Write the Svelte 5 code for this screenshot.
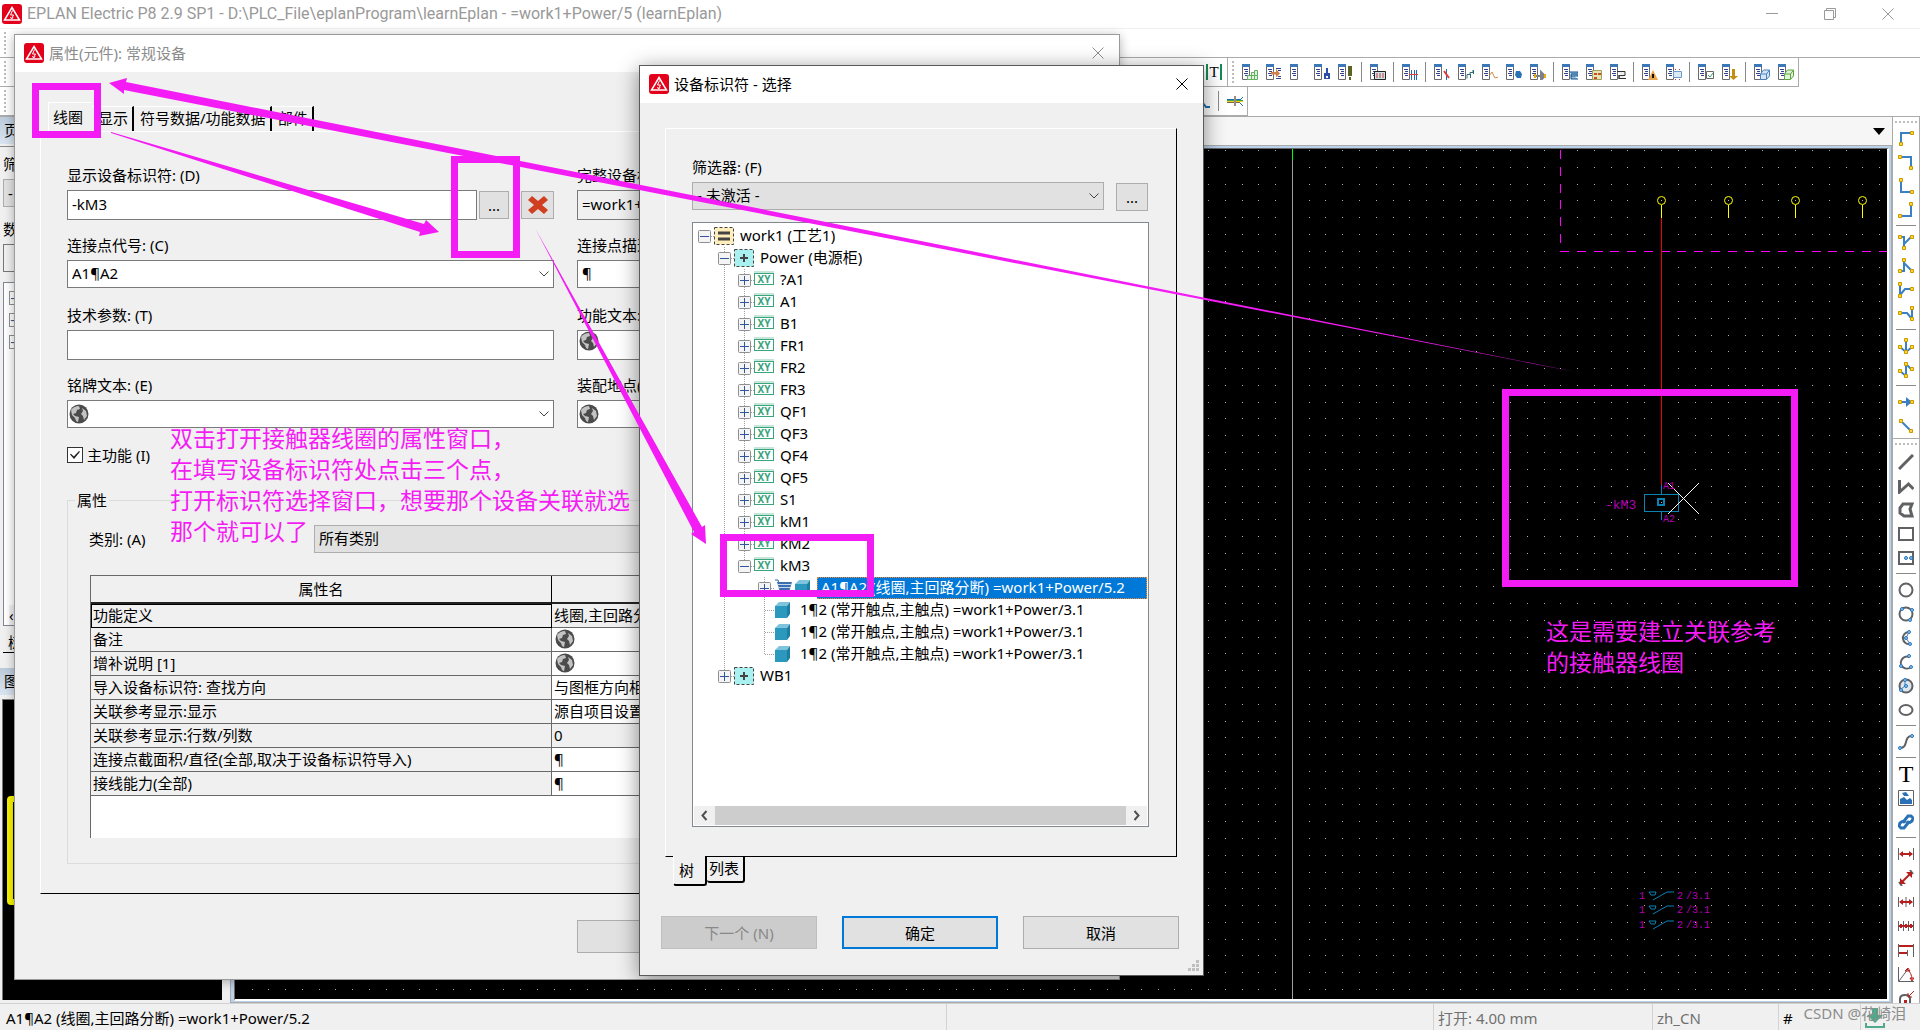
<script lang="ts">
    type Shape = { d: string; s?: string; f?: string; w?: number };
    type TreeRow = {
        depth: number;
        text: string;
        kind: "plant" | "place" | "xy" | "part";
        node?: "open" | "closed";
        last?: boolean;
        guides?: number[];
        selected?: boolean;
    };

    const PITCH = 16.78;

    let canvasWidth = $state(1652);
    let canvasHeight = $state(850);

    // Grid dots of the schematic page, snapped to whole pixels.
    let dots = $derived.by(() => {
        let d = "";
        for (let y = 1; y < canvasHeight; y += PITCH) {
            for (let x = 16.5; x < canvasWidth; x += PITCH) {
                d += `M${Math.round(x)} ${Math.round(y)}h1v1h-1z`;
            }
        }
        return d;
    });

    const connectors = [1426, 1493, 1560, 1627];
    const contacts = [746, 760, 775];

    const deviceNames = [
        "?A1", "A1", "B1", "FR1", "FR2", "FR3", "QF1",
        "QF3", "QF4", "QF5", "S1", "kM1", "kM2",
    ];

    const tree: TreeRow[] = [
        { depth: 0, text: "work1 (工艺1)", kind: "plant", node: "open" },
        { depth: 1, text: "Power (电源柜)", kind: "place", node: "open" },
        ...deviceNames.map((text): TreeRow => ({
            depth: 2, text, kind: "xy", node: "closed", guides: [1],
        })),
        { depth: 2, text: "kM3", kind: "xy", node: "open", guides: [1], last: true },
        {
            depth: 3,
            text: "A1¶A2 (线圈,主回路分断) =work1+Power/5.2",
            kind: "part",
            node: "closed",
            guides: [1],
            selected: true,
        },
        { depth: 3, text: "1¶2 (常开触点,主触点) =work1+Power/3.1", kind: "part", guides: [1] },
        { depth: 3, text: "1¶2 (常开触点,主触点) =work1+Power/3.1", kind: "part", guides: [1] },
        { depth: 3, text: "1¶2 (常开触点,主触点) =work1+Power/3.1", kind: "part", guides: [1], last: true },
        { depth: 1, text: "WB1", kind: "place", node: "closed", last: true },
    ];

    const properties = [
        { name: "功能定义", value: "线圈,主回路分断", grey: true, current: true },
        { name: "备注", globe: true },
        { name: "增补说明 [1]", globe: true },
        { name: "导入设备标识符: 查找方向", value: "与图框方向相同" },
        { name: "关联参考显示:显示", value: "源自项目设置" },
        { name: "关联参考显示:行数/列数", value: "0", grey: true },
        { name: "连接点截面积/直径(全部,取决于设备标识符导入)", value: "¶" },
        { name: "接线能力(全部)", value: "¶" },
    ];

    // Toolbar icons: each one is a navigator sheet with its own overlay.
    const sheet: Shape[] = [
        { d: "M0 0h8v3H0z", f: "#3b78b8" },
        { d: "M.5 3v12.500h7V3", s: "#6a6a6a", f: "#fff" },
        { d: "M2 5.500h4M3 7.500h3M2 9.500h4M3 11.500h3", s: "#33438c" },
    ];

    const sheetIcons: (Shape[] | null)[] = [
        [{ d: "M5.500 15.500v-4h4v-3h3v-2h3v9zM9.500 11v4M12.500 8v7M6 11.500h10", s: "#63b263", f: "#dff3df" }],
        [{ d: "M5 8h5V5l4 4.500-4 4v-3H5z", f: "#d5804a" }, { d: "M10 4.500h5M12 6.500h3M12 12.500h3M10 14.500h5", s: "#33438c" }],
        [],
        [{ d: "M12 4h2v5h-2z", f: "#2c4fa8" }, { d: "M10 9h6v6h-6z", f: "#2c4fa8" }, { d: "M12 12h2v2h-2z", f: "#fff" }],
        [{ d: "M10 2h4v10h-4zM11 13h2v3h-2z", f: "#5b6426" }],
        null,
        [{ d: "M4.500 7.500h11v8h-11z", s: "#222", f: "#cfe3ea" }, { d: "M7 9v5M10 9v5M13 9v5", s: "#c33b3b" }],
        null,
        [{ d: "M9.500 6v10M12.500 6v10M14.500 6v10", s: "#1c6fae" }, { d: "M7 10.500h9", s: "#e43b3b" }],
        null,
        [{ d: "M12.500 5v11", s: "#1c6fae" }, { d: "M10 7l5 7", s: "#e43b3b", w: 2 }],
        [{ d: "M9 14.500v-4h3v-2h3V6M12.500 10v4M15.500 6v4", s: "#2f6f74" }],
        [{ d: "M7 12l3-4 3 6 3-1", s: "#d38a4e" }],
        [{ d: "M10 7h4l2 3-1 4h-4l-2-3z", f: "#2a72b5" }],
        [{ d: "M5 12h8M11 8l4 4-4 4z", s: "#7d828a", f: "#7d828a", w: 2 }, { d: "M4 10h2v4H4zM14 10h2v4h-2z", f: "#e0ac10" }],
        null,
        [{ d: "M7 8h9v4H9v3h7M9 12v-2h6", s: "#0f4f86", f: "#8fc0e6" }],
        [{ d: "M6.500 6.500h9v9h-9z", s: "#a4a060", f: "#e6e3b5" }, { d: "M8 9h3v2H8zM12 9h3v2h-3zM8 13h3v2H8z", f: "#c8501f" }],
        [{ d: "M7 7.500h8v4H9v3h7M9 11v4", s: "#333", f: "#eee" }],
        null,
        [{ d: "M11 6l5 10H6z", f: "#eba54c" }, { d: "M10 10h2v4h-2z", f: "#111" }],
        [{ d: "M7.500 7.500h8v6h-8z", s: "#6c9bc4", f: "#d9e9f6" }, { d: "M9.500 5v1M13.500 5v1M9.500 15v1M13.500 15v1", s: "#c33b3b" }],
        null,
        [{ d: "M8.500 7.500h7v7h-7z", s: "#666", f: "#fff" }, { d: "M10 11l2 2 3-4", s: "#3a9c6e" }],
        [{ d: "M10 5h3v7h3l-4.500 4L7 12h3z", f: "#c2900f" }],
        null,
        [{ d: "M6.500 10l3-4h6v6l-3 3.500h-6zM6.500 10h6v5M12.500 10l3-4", s: "#4a80bd", f: "#d5e5f5" }],
        [{ d: "M6.500 10l3-4h6v6l-3 3.500h-6zM6.500 10h6v5M12.500 10l3-4", s: "#5aa83f", f: "#e1f2d8" }],
    ];

    const blue = "#3b7fc4";
    const grey = "#5f6163";
    const red = "#b51f1f";

    function pin(x: number, y: number): Shape {
        return { d: `M${x - 1.5} ${y - 1.5}h3v3h-3z`, s: "#c99a00", f: "#ffd83a" };
    }

    function dot(x: number, y: number): Shape {
        return { d: `M${x - 1.5} ${y}a1.500 1.500 0 1 0 3 0a1.500 1.500 0 1 0-3 0`, s: "#2b74b8", f: "#8fc4f0" };
    }

    const connectionIcons: (Shape[] | null)[] = [
        [{ d: "M3 13V3h11", s: blue, w: 2 }, pin(3, 14), pin(14, 3)],
        [{ d: "M2 3h11v10", s: blue, w: 2 }, pin(2, 3), pin(13, 14)],
        [{ d: "M3 2v12h11", s: blue, w: 2 }, pin(3, 2), pin(14, 14)],
        [{ d: "M2 14h11V3", s: blue, w: 2 }, pin(2, 14), pin(13, 2)],
        null,
        [{ d: "M2 3h4v11M6 10l8-8", s: blue, w: 2 }, pin(2, 3), pin(14, 3), pin(6, 14)],
        [{ d: "M2 13h4V3M6 5l8 8", s: blue, w: 2 }, pin(2, 13), pin(14, 13), pin(6, 2)],
        [{ d: "M2 3v10M2 13l5-6h7", s: blue, w: 2 }, pin(2, 2), pin(2, 14), pin(14, 7)],
        [{ d: "M14 3v10M14 13L9 7H2", s: blue, w: 2 }, pin(14, 2), pin(14, 13), pin(2, 7)],
        null,
        [{ d: "M8 2v12M2 9l6 5 6-5", s: blue, w: 2 }, pin(8, 2), pin(2, 9), pin(14, 9), pin(8, 14)],
        [{ d: "M2 9l6 5V2l6 6", s: blue, w: 2 }, pin(8, 2), pin(2, 9), pin(14, 7), pin(8, 14)],
        null,
        [{ d: "M2 8h10", s: blue, w: 2 }, { d: "M8 3l6 5-6 5z", f: blue }, pin(2, 8), pin(14, 8)],
        [{ d: "M3 3l10 10", s: blue, w: 2 }, pin(3, 3), pin(13, 13)],
    ];

    const ring = "M1.500 8a6.500 6.500 0 1 0 13 0a6.500 6.500 0 1 0-13 0";

    const drawIcons: (Shape[] | "T" | null)[] = [
        [{ d: "M1 15L15 1", s: grey, w: 3 }],
        [{ d: "M1.500 2v12l9-8 5 5", s: grey, w: 3 }],
        [{ d: "M2 6l3-4h9l-2 5 2 7H6l-4-3z", s: grey, w: 3 }],
        [{ d: "M1 2h14v12H1z", s: grey, w: 2 }],
        [{ d: "M1 2h14v12H1z", s: grey, w: 2 }, dot(8, 8), dot(13, 8)],
        null,
        [{ d: ring, s: grey, w: 2 }],
        [{ d: ring, s: grey, w: 2 }, dot(4, 3), dot(14, 4), dot(12, 14)],
        [{ d: "M10 2a6 6 0 1 0 2 12", s: grey, w: 2 }, { d: "M11 2L8 8l4 6", s: blue }, dot(11, 2), dot(8, 8), dot(12, 14)],
        [{ d: "M11 3a6 6 0 1 0 2 10", s: grey, w: 2 }, dot(11, 2), dot(3, 12), dot(13, 13)],
        [{ d: ring, s: grey, f: "#dde6ee", w: 2 }, { d: "M7 2v6l-5 4", s: blue }, dot(7, 2), dot(8, 8), dot(3, 12)],
        [{ d: "M1.500 8a6.500 5 0 1 0 13 0a6.500 5 0 1 0-13 0", s: grey, w: 2 }],
        null,
        [{ d: "M2 14c9 0 3-12 12-12", s: grey, w: 2 }, dot(2, 14), dot(14, 2)],
        null,
        "T",
        [{ d: "M.5 .5h15v15H.5z", s: grey, f: "#fff" }, { d: "M2 14V9l4-2 3 3 3-2 2 2v4zM4 3l4-1 3 4H6z", f: "#2a72b5" }],
        [{ d: "M7 9l-1-2 4-5h3l2 2-1 3-3 2M9 7l1 2-4 5H3l-2-2 1-3 3-2", s: "#2a72b5", w: 3 }],
        null,
        [{ d: "M.5 2v12M15.500 2v12", s: grey }, { d: "M2 8h12", s: red, w: 2 }, { d: "M1 8l4-3v6zM15 8l-4-3v6z", f: red }],
        [{ d: "M1 12l3 4M12 0l3 4", s: grey, w: 2 }, { d: "M4 12l8-8", s: red, w: 2 }, { d: "M2 14V8l6 6zM14 2v6L8 2z", f: red }],
        [{ d: "M.5 3v10M8 3v10M15.500 3v10", s: grey }, { d: "M2 8h12", s: red, w: 2 }, { d: "M1 8l4-3v6zM15 8l-4-3v6z", f: red }],
        [{ d: "M.5 3v10M5.500 3v10M10.500 3v10M15.500 3v10", s: grey }, { d: "M1 8h14M3 6v4M8 6v4M13 6v4", s: red, w: 2 }],
        [{ d: "M.5 2v13M15.500 2v13M9.500 8v6", s: grey }, { d: "M1 4h14M1 11h8", s: red, w: 2 }],
        [{ d: "M.5 1v14.500H16M1 15L10 3", s: grey }, { d: "M9 3q5 4 5 11M7 5l3-3 2 3zM12 12l2 3 2-3z", s: red }],
        [{ d: "M2 15V9q0-4 5-4t5 4v6", s: grey, w: 2 }, { d: "M16 1l-5 5M10 3v4h4", s: red }, { d: "M6 10h3v3H6z", f: red }],
    ];
</script>

{#snippet icon(shapes: Shape[])}
    <svg class="icon" viewBox="0 0 16 16" aria-hidden="true">
        {#each shapes as shape}
            <path
                d={shape.d}
                stroke={shape.s ?? "none"}
                stroke-width={shape.w ?? 1}
                fill={shape.f ?? "none"}
            />
        {/each}
    </svg>
{/snippet}

{#snippet logo()}
    <svg class="logo" viewBox="0 0 20 20" aria-hidden="true">
        <rect width="20" height="20" rx="3" fill="#e3001b" />
        <path d="M10 3.500L17.500 16h-15z" fill="none" stroke="#fff" stroke-width="1.500" />
        <path d="M10.500 6.500L8.500 11h3L9.500 15M8.500 13l1 2 1.500-1.500" fill="none" stroke="#fff" />
    </svg>
{/snippet}

{#snippet globe()}
    <svg class="globe" viewBox="0 0 20 20" aria-hidden="true">
        <circle cx="10" cy="10" r="9.500" fill="#4b4b4b" />
        <path
            d="M2 6q3-4 8-4l1 3-3 1-1 3-3 1 2 2 4 1-1 5q-2 0-3-4L3 11zM13 4l4 3 1 5-3 4-1-4-2-2 2-3z"
            fill="#c3c3c3"
        />
    </svg>
{/snippet}

{#snippet chevron()}
    <svg class="chevron" viewBox="0 0 12 8" aria-hidden="true">
        <path d="M1.500 1.500L6 6l4.500-4.500" fill="none" stroke="#444" />
    </svg>
{/snippet}

{#snippet cross()}
    <svg class="cross" viewBox="0 0 12 12" aria-hidden="true">
        <path d="M.5 .5l11 11M11.500 .5l-11 11" fill="none" stroke="currentColor" />
    </svg>
{/snippet}

<div class="app">
    <header class="title-bar">
        {@render logo()}
        <span class="title">
            EPLAN Electric P8 2.9 SP1 - D:\PLC_File\eplanProgram\learnEplan - =work1+Power/5 (learnEplan)
        </span>
        <div class="window-buttons">
            <button aria-label="最小化">
                <svg class="cross" viewBox="0 0 12 12"><path d="M0 5.500h12" stroke="#999" /></svg>
            </button>
            <button aria-label="还原">
                <svg class="cross" viewBox="0 0 12 12">
                    <path d="M.5 2.500h9v9h-9zM2.500 2V.5h9v9H10" fill="none" stroke="#999" />
                </svg>
            </button>
            <button aria-label="关闭">{@render cross()}</button>
        </div>
    </header>

    <div class="menu-row"><span class="grip"></span></div>
    <div class="tool-row">
        <div class="toolbar text-tools">
            <span class="grip"></span>
            <button class="tool bars" aria-label="文本">T</button>
        </div>
        <div class="toolbar">
            <span class="grip"></span>
            {#each sheetIcons as overlay}
                {#if overlay}
                    <button class="tool" aria-label="导航器">{@render icon([...sheet, ...overlay])}</button>
                {:else}
                    <span class="divider"></span>
                {/if}
            {/each}
        </div>
    </div>
    <div class="tool-row second">
        <div class="toolbar wire-tools">
            <span class="grip"></span>
            <button class="tool" aria-label="角">{@render icon([{ d: "M1 1l10 13h4", s: "#1c6fae", w: 2 }])}</button>
            <span class="divider"></span>
            <button class="tool" aria-label="电缆">
                {@render icon([
                    { d: "M0 6.500h13", s: "#1c6fae" },
                    { d: "M0 7.500h16", s: "#3aa24a" },
                    { d: "M0 8.500h16", s: "#f2d21b" },
                    { d: "M0 9.500h13", s: "#7a6a40" },
                    { d: "M8 3v10", s: "#9a8a88", w: 2 },
                    { d: "M13 7l3-3M13 10l3 3", s: "#1c6fae" },
                ])}
            </button>
        </div>
    </div>

    <main class="workspace">
        <aside class="navigator">
            <div class="pane-head">页</div>
            <div class="pane-body">
                <span class="pane-label">筛选器:</span>
                <div class="pane-combo">- 未激活 -</div>
                <span class="pane-label value-label">数值:</span>
                <div class="pane-input"></div>
                <div class="pane-tree">
                    <span class="node">−</span>
                    <span class="node">−</span>
                    <span class="node">−</span>
                    <span class="pane-scroll">‹</span>
                </div>
                <div class="pane-tab">树</div>
            </div>
            <div class="pane-head">图形预览</div>
            <div class="preview"><div class="preview-frame"></div></div>
        </aside>

        <section class="document">
            <div class="document-tabs">
                <svg class="drop" viewBox="0 0 12 7" aria-hidden="true"><path d="M0 0h12L6 7z" /></svg>
            </div>
            <div class="document-frame">
                <div class="canvas" bind:clientWidth={canvasWidth} bind:clientHeight={canvasHeight}>
                    <svg width={canvasWidth} height={canvasHeight}>
                        <path d={dots} fill="#b4b4b4" shape-rendering="crispEdges" />
                        <g fill="none" shape-rendering="crispEdges">
                            <path d="M1057.500 0V{canvasHeight}" stroke="#a0a0a0" />
                            <path d="M1057.500 0v11" stroke="#00ff00" />
                            <path d="M1325.500 1v102" stroke="#f0f" stroke-dasharray="9 7.780" />
                            <path d="M1325 102.500H{canvasWidth}" stroke="#f0f" stroke-dasharray="9 7.780" />
                            <path d="M1426.500 69v267" stroke="#f00000" />
                            <path
                                d="M1426.500 336v9M1409.500 345.500h34v17h-34zM1426.500 362v9"
                                stroke="#0a82b4"
                            />
                            <path d="M1423 350h6v6h-6z" stroke="#0a82b4" stroke-width="2" />
                        </g>
                        {#each connectors as x}
                            <circle cx={x + 0.5} cy="51.500" r="4" fill="none" stroke="#ff0" />
                            <path d="M{x}.5 56v13" stroke="#ff0" />
                        {/each}
                        <path d="M1433 334l31 31M1464 334l-31 31" stroke="#fff" />
                        <text class="cad" x="1370" y="360" font-size="13">-kM3</text>
                        <text class="cad" x="1428" y="340" font-size="10">A1</text>
                        <text class="cad" x="1428" y="373" font-size="10">A2</text>
                        {#each contacts as y}
                            <text class="cad" x="1404" {y} dy="4" font-size="10">1</text>
                            <path
                                d="M1414 {y - 3}h7l-1 3h-4zM1418 {y + 5}l14-8h7"
                                fill="none"
                                stroke="#0a82b4"
                            />
                            <text class="cad" x="1442" {y} dy="4" font-size="10">2</text>
                            <text class="cad" x="1451" {y} dy="4" font-size="10">/3.1</text>
                        {/each}
                    </svg>
                </div>
            </div>
        </section>

        <aside class="side-tools">
            <div class="side-group">
                <span class="grip flat"></span>
                {#each connectionIcons as shapes}
                    {#if shapes}
                        <button class="tool" aria-label="连接符号">{@render icon(shapes)}</button>
                    {:else}
                        <span class="divider flat"></span>
                    {/if}
                {/each}
            </div>
            <div class="side-group">
                <span class="grip flat"></span>
                {#each drawIcons as shapes}
                    {#if shapes === "T"}
                        <button class="tool letter" aria-label="文本">T</button>
                    {:else if shapes}
                        <button class="tool" aria-label="图形">{@render icon(shapes)}</button>
                    {:else}
                        <span class="divider flat"></span>
                    {/if}
                {/each}
            </div>
        </aside>
    </main>

    <footer class="status">
        <span class="message">A1¶A2 (线圈,主回路分断) =work1+Power/5.2</span>
        <span class="spacer"></span>
        <span class="open">打开: 4.00 mm</span>
        <span class="lang">zh_CN</span>
        <span class="hash">#</span>
        <span class="save">
            <svg viewBox="0 0 20 20" aria-hidden="true">
                <path d="M7 0h6v7h5l-8 8-8-8h5zM0 15h2v3h16v-3h2v5H0z" fill="#4fa98a" />
            </svg>
        </span>
    </footer>
</div>

<div class="window properties" role="dialog" aria-label="属性(元件): 常规设备">
    <div class="window-title inactive">
        {@render logo()}
        <span>属性(元件): 常规设备</span>
        <button class="close" aria-label="关闭">{@render cross()}</button>
    </div>
    <div class="window-body">
        <div class="tabs">
            <button class="tab active">线圈</button>
            <button class="tab">显示</button>
            <button class="tab">符号数据/功能数据</button>
            <button class="tab">部件</button>
        </div>
        <div class="page">
            <div class="form">
                <div class="field">
                    <label for="dt">显示设备标识符: (D)</label>
                    <div class="with-buttons">
                        <input id="dt" class="tall" value="-kM3" />
                        <button class="push more">...</button>
                        <button class="push delete" aria-label="删除">
                            <svg viewBox="0 0 20 20" aria-hidden="true">
                                <path
                                    d="M4 1l6 5 6-5 4 4-6 5 6 5-4 4-6-5-6 5-4-4 6-5-6-5z"
                                    fill="#cf3f20"
                                />
                            </svg>
                        </button>
                    </div>
                </div>
                <div class="field">
                    <label for="full-dt">完整设备标识符:</label>
                    <input id="full-dt" class="tall readonly" value="=work1+Power-kM3" readonly />
                </div>
                <div class="field">
                    <label for="points">连接点代号: (C)</label>
                    <div class="combo">
                        <select id="points"><option>A1¶A2</option></select>
                        {@render chevron()}
                    </div>
                </div>
                <div class="field">
                    <label for="point-text">连接点描述:</label>
                    <input id="point-text" value="¶" />
                </div>
                <div class="field">
                    <label for="tech">技术参数: (T)</label>
                    <input id="tech" class="tall" value="" />
                </div>
                <div class="field">
                    <label for="function-text">功能文本:</label>
                    <div class="combo top">
                        <input id="function-text" class="tall" value="" />
                        {@render globe()}
                    </div>
                </div>
                <div class="field">
                    <label for="plate">铭牌文本: (E)</label>
                    <div class="combo">
                        <select id="plate"><option></option></select>
                        {@render globe()}
                        {@render chevron()}
                    </div>
                </div>
                <div class="field">
                    <label for="mounting">装配地点(描述性):</label>
                    <div class="combo">
                        <input id="mounting" value="" />
                        {@render globe()}
                    </div>
                </div>
            </div>
            <label class="check"><input type="checkbox" checked />主功能 (I)</label>
            <fieldset>
                <legend>属性</legend>
                <div class="category">
                    <label for="category">类别: (A)</label>
                    <select id="category" class="grey"><option>所有类别</option></select>
                </div>
                <div class="table-box">
                    <table>
                        <thead>
                            <tr><th>属性名</th><th>数值</th></tr>
                        </thead>
                        <tbody>
                            {#each properties as row}
                                <tr>
                                    <td class:current={row.current}>{row.name}</td>
                                    <td class="value" class:grey={row.grey}>
                                        {#if row.globe}{@render globe()}{:else}{row.value}{/if}
                                    </td>
                                </tr>
                            {/each}
                        </tbody>
                    </table>
                </div>
            </fieldset>
        </div>
        <div class="actions end">
            <button class="push">确定</button>
            <button class="push">取消</button>
            <button class="push">应用</button>
        </div>
    </div>
</div>

<div class="window chooser" role="dialog" aria-label="设备标识符 - 选择">
    <div class="window-title">
        {@render logo()}
        <span>设备标识符 - 选择</span>
        <button class="close" aria-label="关闭">{@render cross()}</button>
    </div>
    <div class="window-body">
        <div class="page">
            <label for="filter">筛选器: (F)</label>
            <div class="filter">
                <div class="combo">
                    <select id="filter" class="grey"><option>- 未激活 -</option></select>
                    {@render chevron()}
                </div>
                <button class="push more">...</button>
            </div>
            <div class="tree">
                <div class="rows" role="tree">
                    {#each tree as row}
                        <div
                            class="row"
                            role="treeitem"
                            aria-selected={!!row.selected}
                            aria-level={row.depth + 1}
                            tabindex="-1"
                        >
                            {#each Array(row.depth) as _, level}
                                <span class="cell" class:line={row.guides?.includes(level)}></span>
                            {/each}
                            <span class="cell branch" class:line={row.depth > 0} class:half={row.last}>
                                {#if row.node}
                                    <svg class="expander" viewBox="0 0 13 13">
                                        <rect x=".5" y=".5" width="12" height="12" rx="1" fill="#f4f4f4" stroke="#8f8f8f" />
                                        <path d={row.node === "open" ? "M2 6.500h9" : "M2 6.500h9M6.500 2v9"} stroke="#33559b" />
                                    </svg>
                                {/if}
                            </span>
                            {#if row.kind === "xy"}
                                <svg class="row-icon" viewBox="0 0 20 18">
                                    <rect x=".5" y="2.500" width="19" height="11" fill="#fff" stroke="#3aa47c" />
                                    <path d="M0 1h20" stroke="#c5e6d9" stroke-width="2" />
                                    <text x="10" y="12" text-anchor="middle">XY</text>
                                </svg>
                            {:else if row.kind === "part"}
                                {#if row.selected}
                                    <svg class="row-icon" viewBox="0 0 20 18">
                                        <path d="M1 1h3l3 13h9" fill="none" stroke="#2f62a8" />
                                        <path d="M3 3h15l-3 10H6z" fill="#3d6eb0" />
                                        <path d="M4 5.500h14M5 8.500h12M6 11.500h10" stroke="#c7d8ee" />
                                    </svg>
                                {/if}
                                <svg class="row-icon" viewBox="0 0 20 18">
                                    <path d="M1 5l4-4h11l-3 4z" fill="#7fc4dc" />
                                    <path d="M1 5h12v12H1z" fill="#2b98bd" />
                                    <path d="M13 5l3-4v12l-3 4z" fill="#1a7fa3" />
                                </svg>
                            {:else}
                                <svg class="row-icon" viewBox="0 0 20 18">
                                    <rect
                                        x=".5"
                                        y=".5"
                                        width="19"
                                        height="17"
                                        fill={row.kind === "plant" ? "#ffeebb" : "#a9f1f1"}
                                        stroke="#444"
                                        stroke-dasharray="3 2"
                                    />
                                    <path
                                        d={row.kind === "plant" ? "M4 6h12M4 12h12" : "M6 9h8M10 5v8"}
                                        stroke="#444"
                                        stroke-width={row.kind === "plant" ? 3 : 2}
                                    />
                                </svg>
                            {/if}
                            <span class="row-text" class:selected={row.selected}>{row.text}</span>
                        </div>
                    {/each}
                </div>
                <div class="scroll">
                    <svg viewBox="0 0 20 19"><path d="M12 5L8 9.500l4 4.500" /></svg>
                    <span class="thumb"></span>
                    <svg viewBox="0 0 20 19"><path d="M8 5l4 4.500L8 14" /></svg>
                </div>
            </div>
        </div>
        <div class="bottom-tabs">
            <button class="active">树</button>
            <button>列表</button>
        </div>
        <div class="actions">
            <button class="push" disabled>下一个 (N)</button>
            <button class="push default">确定</button>
            <button class="push">取消</button>
        </div>
    </div>
    <svg class="size-grip" viewBox="0 0 12 12" aria-hidden="true">
        <path d="M8 0h3v3H8zM4 4h3v3H4zM8 4h3v3H8zM0 8h3v3H0zM4 8h3v3H4zM8 8h3v3H8z" fill="#bfbfbf" />
    </svg>
</div>

<svg class="notes" viewBox="0 0 1920 1030" aria-hidden="true">
    <g fill="none" stroke="#f41cf4" stroke-width="7">
        <path d="M35.500 86.500h62v48h-62z" />
        <path d="M454.500 159.500h62v95h-62z" />
        <path d="M723.500 537.500h147v56h-147z" />
        <path d="M1505.500 392.500h289v191h-289z" />
    </g>
    <g fill="#f41cf4">
        <path d="M111 132v1L420 232L419 236L439 232L426 220L424 224z" />
        <path d="M109 83L127 78L126 82L1576 372L124 90L124 94z" />
        <path d="M535 228L694 532L691 534L706 544L705 525L702 527z" />
    </g>
</svg>
<p class="note left">
    双击打开接触器线圈的属性窗口，<br />在填写设备标识符处点击三个点，<br
    />打开标识符选择窗口，想要那个设备关联就选<br />那个就可以了
</p>
<p class="note right">这是需要建立关联参考<br />的接触器线圈</p>
<span class="watermark">CSDN @花崎泪</span>

<style>
    :global(body) {
        overflow: hidden;
        font-family: "Noto Sans", "Noto Sans CJK SC", sans-serif;
        font-size: 15px;
        line-height: 20px;
        color: #000;
    }

    button,
    input,
    select {
        box-sizing: border-box;
        margin: 0;
        font: inherit;
        color: inherit;
    }

    button {
        padding: 0;
        border: none;
        background: none;
    }

    svg {
        display: block;
        flex: none;
    }

    .app {
        display: flex;
        flex-direction: column;
        height: 100vh;
        background: #fff;
    }

    .title-bar {
        display: flex;
        align-items: center;
        height: 28px;
        padding-left: 2px;
        border-bottom: 1px solid #f0f0f0;
        color: #999;
    }

    .logo {
        width: 20px;
        height: 20px;
    }

    .title {
        flex: 1;
        padding-left: 5px;
        font-family: Roboto, sans-serif;
        font-size: 16px;
        white-space: nowrap;
    }

    .window-buttons {
        display: flex;
        gap: 46px;
        padding-right: 26px;
    }

    .cross {
        width: 12px;
        height: 12px;
    }

    .menu-row,
    .tool-row {
        display: flex;
        box-sizing: border-box;
        height: 29px;
        border-bottom: 1px solid #ababab;
    }

    .tool-row {
        border-bottom: none;
    }

    .tool-row.second {
        height: 30px;
        border-bottom: 1px solid #ababab;
    }

    .toolbar {
        display: flex;
        align-items: center;
        box-sizing: border-box;
        border-right: 1px solid #ababab;
        border-bottom: 1px solid #ababab;
    }

    .text-tools,
    .wire-tools {
        justify-content: flex-end;
        width: 1228px;
    }

    .wire-tools {
        width: 1248px;
    }

    .text-tools .grip,
    .wire-tools .grip {
        margin-right: auto;
    }

    .grip {
        width: 2px;
        height: 22px;
        margin: 3px 4px;
        background: repeating-linear-gradient(#bdbdbd 0 2px, transparent 2px 4px);
    }

    .grip.flat {
        width: 22px;
        height: 2px;
        margin: 4px 0 5px;
        background: repeating-linear-gradient(90deg, #bdbdbd 0 2px, transparent 2px 4px);
    }

    .side-group:first-child .grip {
        margin-bottom: 3px;
    }

    .tool {
        display: flex;
        justify-content: center;
        align-items: center;
        width: 24px;
        height: 24px;
    }

    .tool.bars {
        width: 16px;
        height: 16px;
        margin-right: 5px;
        border: solid #168a56;
        border-width: 0 2px;
        font-family: "Liberation Serif", serif;
    }

    .tool.letter {
        font-family: "Liberation Serif", serif;
        font-size: 24px;
    }

    .icon {
        width: 16px;
        height: 16px;
    }

    .divider {
        width: 1px;
        height: 20px;
        margin: 0 4px 0 3px;
        background: #8a8a8a;
    }

    .divider.flat {
        width: 20px;
        height: 1px;
        margin: 3px 0 4px;
    }

    .workspace {
        display: flex;
        flex: 1;
        min-height: 0;
    }

    .navigator {
        display: flex;
        flex-direction: column;
        width: 230px;
        background: #f0f0f0;
    }

    .pane-head {
        height: 27px;
        padding-left: 4px;
        line-height: 26px;
        background: linear-gradient(#bccbdb, #d8e4f0);
    }

    .pane-body {
        display: flex;
        flex-direction: column;
        height: 521px;
        margin-top: 2px;
        padding-left: 3px;
        border-top: 1px solid #8a8a8a;
    }

    .pane-label {
        margin-top: 7px;
    }

    .value-label {
        margin-top: 12px;
    }

    .pane-combo,
    .pane-input {
        height: 26px;
        margin-top: 5px;
        padding-left: 4px;
        border: 1px solid #adadad;
        line-height: 26px;
        background: #e1e1e1;
    }

    .pane-input {
        border-color: #777;
        background: #f0f0f0;
    }

    .pane-tree {
        display: flex;
        flex-direction: column;
        gap: 8px;
        height: 334px;
        margin-top: 10px;
        padding: 8px 0 0 5px;
        border: 1px solid #828790;
        background: #fff;
    }

    .node {
        width: 12px;
        height: 12px;
        border: 1px solid #8f8f8f;
        line-height: 12px;
        color: #33559b;
    }

    .pane-scroll {
        margin-top: auto;
        background: #f0f0f0;
    }

    .pane-tab {
        margin-top: 6px;
        padding-left: 5px;
        border-bottom: 1px solid #000;
    }

    .preview {
        flex: 1;
        margin: 4px 8px 3px 2px;
        padding: 96px 4px 0;
        border: solid #777;
        border-width: 1px 0 0 1px;
        background: #000;
    }

    .preview-frame {
        height: 97px;
        border: 6px solid #f8f400;
        border-radius: 4px;
    }

    .document {
        display: flex;
        flex: 1;
        flex-direction: column;
        min-width: 0;
    }

    .document-tabs {
        display: flex;
        justify-content: flex-end;
        align-items: center;
        height: 28px;
        padding-right: 7px;
        background: #f6f6f6;
    }

    .drop {
        width: 12px;
        height: 7px;
    }

    .document-frame {
        display: flex;
        flex: 1;
        min-height: 0;
        border: solid #b9d1ea;
        border-width: 3px 3px 2px 4px;
        outline: 1px solid #ababab;
        outline-offset: -1px;
    }

    .canvas {
        flex: 1;
        min-width: 0;
        overflow: hidden;
        border: solid #696969;
        border-width: 1px 0 0 1px;
        border-right: 2px solid #fff;
        border-bottom: 2px solid #fff;
        background: #000;
    }

    .cad {
        font-family: "Liberation Mono", monospace;
        fill: #b400b4;
    }

    .side-tools {
        width: 27px;
        overflow: hidden;
        border-left: 1px solid #ababab;
    }

    .side-group {
        display: flex;
        flex-direction: column;
        align-items: center;
        border-right: 1px solid #ababab;
        border-bottom: 1px solid #ababab;
    }

    .status {
        display: flex;
        box-sizing: border-box;
        height: 27px;
        border-top: 1px solid #d0d0d0;
        line-height: 28px;
        color: #707070;
        background: #f0f0f0;
    }

    .status span {
        box-sizing: border-box;
        padding-left: 4px;
        border-right: 1px solid #d2d2d2;
        white-space: nowrap;
    }

    .status .message {
        flex: 948;
        padding-left: 6px;
        color: #000;
    }

    .status .spacer {
        flex: 486;
    }

    .status .open {
        width: 219px;
    }

    .status .lang {
        width: 126px;
    }

    .status .hash {
        width: 82px;
        color: #000;
    }

    .status .save {
        width: 59px;
        padding-top: 4px;
        border-right: none;
    }

    .save svg {
        width: 20px;
        height: 20px;
    }

    .window {
        position: absolute;
        box-sizing: border-box;
        border: 1px solid #5a5a5a;
        background: #f0f0f0;
    }

    .properties {
        top: 34px;
        left: 14px;
        width: 1106px;
        border-color: #9a9a9a;
        box-shadow: 0 2px 10px rgba(0, 0, 0, 0.3);
    }

    .chooser {
        top: 65px;
        left: 639px;
        width: 565px;
        box-shadow: 0 4px 20px rgba(0, 0, 0, 0.45);
    }

    .window-title {
        display: flex;
        align-items: center;
        box-sizing: border-box;
        gap: 5px;
        height: 37px;
        padding: 0 15px 2px 9px;
        background: #fff;
    }

    .window-title.inactive {
        color: #8c8c8c;
    }

    .close {
        margin-left: auto;
    }

    .properties .window-body {
        padding: 30px 27px 26px 25px;
    }

    .chooser .window-body {
        padding: 25px 26px 26px 25px;
    }

    .tabs {
        display: flex;
        align-items: flex-end;
        height: 29px;
        padding-left: 8px;
    }

    .tab {
        height: 25px;
        padding: 0 4px 2px 6px;
        border-top: 1px solid #fff;
        border-right: 2px solid #000;
        white-space: nowrap;
    }

    .tab.active {
        height: 29px;
        padding: 0 9px 0 4px;
        border-left: 1px solid #fff;
        border-right: none;
    }

    .page {
        border: solid #fff;
        border-width: 1px 0 0 1px;
        border-right: 1px solid #000;
        border-bottom: 1px solid #000;
    }

    .properties .page {
        padding: 34px 27px 29px 26px;
    }

    .form {
        display: grid;
        grid-template-columns: 1fr 1fr;
        grid-auto-rows: 70px;
        column-gap: 23px;
    }

    .field {
        display: flex;
        flex-direction: column;
        gap: 6px;
        min-width: 0;
    }

    .field label {
        line-height: 18px;
    }

    input,
    select {
        height: 28px;
        padding: 0 4px 2px;
        border: 1px solid #7a7a7a;
        border-radius: 0;
        outline: none;
        background: #fff;
    }

    select {
        appearance: none;
        width: 100%;
    }

    .tall {
        height: 30px;
    }

    .readonly {
        background: #f0f0f0;
    }

    select.grey {
        border-color: #adadad;
        background: #e1e1e1;
    }

    .combo {
        display: grid;
        align-items: center;
    }

    .combo > :global(*) {
        grid-area: 1 / 1;
    }

    .combo.top {
        align-items: start;
    }

    .chevron {
        justify-self: end;
        width: 12px;
        height: 8px;
        margin-right: 4px;
        pointer-events: none;
    }

    .globe {
        width: 20px;
        height: 20px;
        margin: 1px 0 1px 2px;
    }

    .with-buttons {
        display: flex;
        align-items: center;
    }

    .with-buttons input {
        flex: 1;
        min-width: 0;
    }

    .push {
        height: 33px;
        border: 1px solid #adadad;
        background: #e1e1e1;
    }

    .push.more {
        width: 30px;
        height: 28px;
        margin-left: 2px;
    }

    .push.delete {
        display: flex;
        justify-content: center;
        align-items: center;
        width: 33px;
        height: 28px;
        margin-left: 12px;
    }

    .delete svg {
        width: 20px;
        height: 20px;
    }

    .check {
        display: flex;
        align-items: center;
        gap: 4px;
        height: 18px;
        padding-bottom: 2px;
    }

    .check input {
        appearance: none;
        display: grid;
        place-content: center;
        width: 16px;
        height: 16px;
        padding: 0;
        border-color: #333;
    }

    .check input:checked::before {
        content: "";
        width: 10px;
        height: 8px;
        background: #222;
        clip-path: polygon(0 45%, 10% 35%, 38% 70%, 90% 0, 100% 10%, 40% 100%);
    }

    fieldset {
        margin: 24px 0 0;
        padding: 15px 22px 25px;
        border: 1px solid #dcdcdc;
    }

    legend {
        margin-left: -15px;
        padding: 0 2px;
        height: 20px;
    }

    .category {
        display: grid;
        grid-template-columns: 224px 1fr;
        align-items: center;
        height: 28px;
        margin-bottom: 22px;
    }

    .category label {
        margin-left: -1px;
    }

    .table-box {
        box-sizing: border-box;
        height: 263px;
        border: solid #696969;
        border-width: 1px 0 0 1px;
        background: #fff;
    }

    table {
        width: 100%;
        table-layout: fixed;
        border-spacing: 0;
    }

    th,
    td {
        box-sizing: border-box;
        height: 24px;
        padding: 0 2px 2px;
        border-right: 1px solid #696969;
        border-bottom: 1px solid #696969;
        line-height: 20px;
        font-weight: normal;
        text-align: left;
        white-space: nowrap;
        overflow: hidden;
        background: #f0f0f0;
    }

    th {
        height: 28px;
        padding-bottom: 0;
        border-right-color: #000;
        border-bottom: 2px solid #222;
        text-align: center;
    }

    th:first-child {
        width: 461px;
    }

    td.current {
        outline: 1px solid #000;
        outline-offset: -1px;
    }

    td.value {
        background: #fff;
    }

    td.value.grey {
        background: #f0f0f0;
    }

    td .globe,
    td :global(.globe) {
        margin: 0 0 0 1px;
    }

    .actions {
        display: grid;
        grid-template-columns: repeat(3, 1fr);
        gap: 25px;
        margin: 30px -2px 0 -4px;
    }

    .actions.end {
        grid-template-columns: repeat(3, 156px);
        justify-content: end;
        margin: 26px -3px 0 0;
    }

    .push:disabled {
        border-color: #bfbfbf;
        color: #888;
        background: #ccc;
    }

    .push.default {
        border: 2px solid #0078d7;
    }

    .chooser .page {
        padding: 28px 27px 29px 26px;
    }

    .filter {
        display: grid;
        grid-template-columns: 1fr 32px;
        gap: 12px;
        margin: 5px 0 12px;
        padding-right: 1px;
    }

    .filter .more {
        width: 32px;
        margin: 1px 0 -1px;
    }

    .tree {
        display: flex;
        flex-direction: column;
        box-sizing: border-box;
        height: 605px;
        padding: 2px 1px 1px;
        border: 1px solid #828790;
        background: #fff;
    }

    .rows {
        flex: 1;
        overflow: hidden;
    }

    .row {
        display: flex;
        align-items: center;
        height: 22px;
        white-space: nowrap;
    }

    .cell {
        display: grid;
        place-items: center;
        flex: none;
        width: 20px;
        height: 22px;
        background-repeat: no-repeat;
    }

    .cell.line {
        background-image: repeating-linear-gradient(#a0a0a0 0 1px, transparent 1px 2px);
        background-position: 10px 0;
        background-size: 1px 100%;
    }

    .cell.half {
        background-size: 1px 12px;
    }

    .cell.branch::before {
        content: "";
        grid-area: 1 / 1;
        justify-self: end;
        width: 9px;
        height: 1px;
        background: repeating-linear-gradient(90deg, #a0a0a0 0 1px, transparent 1px 2px);
    }

    .expander {
        grid-area: 1 / 1;
        width: 13px;
        height: 13px;
    }

    .row-icon {
        width: 20px;
        height: 18px;
    }

    .row-icon text {
        font-size: 10px;
        font-weight: bold;
        fill: #3aa47c;
    }

    .row-text {
        padding: 0 0 2px 6px;
    }

    .row-text.selected {
        flex: 1;
        box-sizing: border-box;
        height: 22px;
        margin-left: 3px;
        padding-left: 3px;
        border: 1px dotted #ff8728;
        line-height: 18px;
        color: #fff;
        background: #0078d7;
    }

    .scroll {
        display: flex;
        height: 19px;
        background: #f0f0f0;
    }

    .scroll svg {
        width: 21px;
        height: 19px;
        fill: none;
        stroke: #505050;
        stroke-width: 2;
    }

    .thumb {
        flex: 1;
        background: #cdcdcd;
    }

    .bottom-tabs {
        display: flex;
        align-items: flex-start;
        height: 29px;
        padding-left: 8px;
    }

    .bottom-tabs button {
        height: 26px;
        padding: 0 4px 2px 2px;
        border: solid #000;
        border-width: 0 2px 2px 0;
        border-radius: 0 0 3px 3px;
    }

    .bottom-tabs .active {
        height: 30px;
        margin-top: -1px;
        padding: 0 11px 0 5px;
        border-left: 1px solid #fff;
        background: #f0f0f0;
    }

    .size-grip {
        position: absolute;
        right: 3px;
        bottom: 3px;
        width: 12px;
        height: 12px;
    }

    .notes {
        position: absolute;
        top: 0;
        left: 0;
        width: 1920px;
        height: 1030px;
        pointer-events: none;
    }

    .note {
        position: absolute;
        margin: 0;
        font-family: "Noto Sans CJK SC", sans-serif;
        font-size: 23px;
        line-height: 31px;
        white-space: nowrap;
        color: #f41cf4;
    }

    .note.left {
        top: 422px;
        left: 170px;
    }

    .note.right {
        top: 615px;
        left: 1546px;
    }

    .watermark {
        position: absolute;
        right: 14px;
        bottom: 7px;
        color: #8c8c8c;
    }
</style>
